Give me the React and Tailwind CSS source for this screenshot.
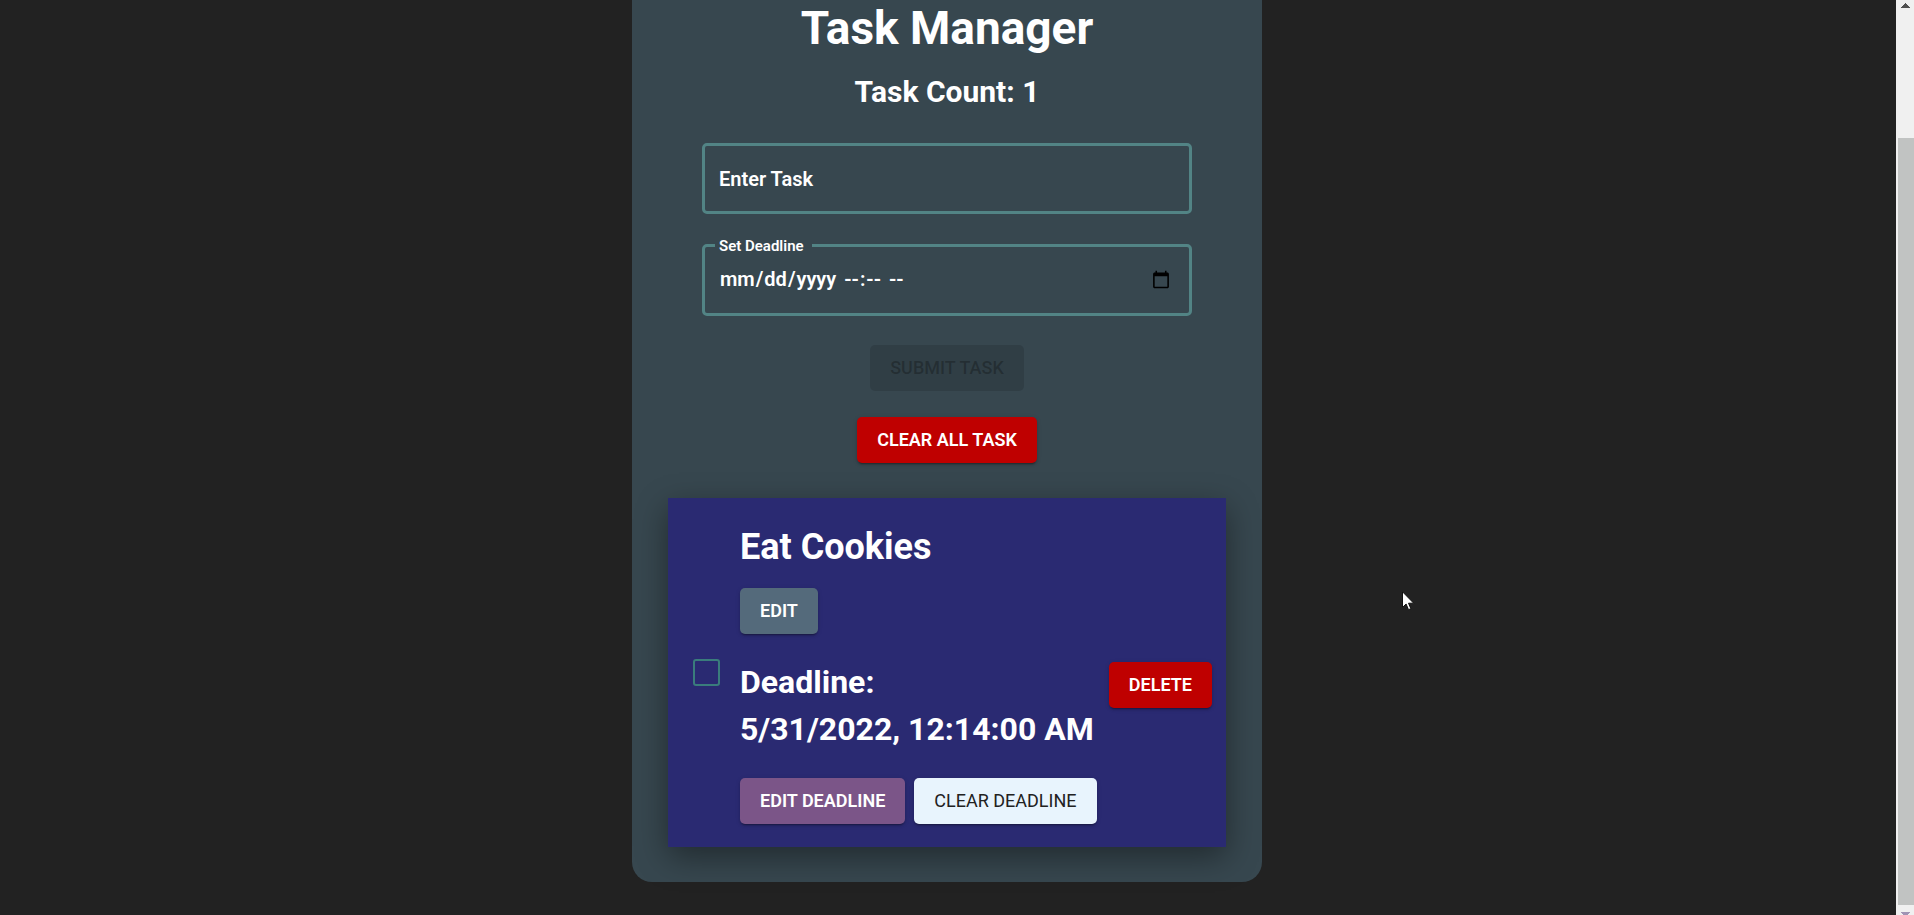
import { useState } from "react";
import clsx from "clsx";

const buttonBase = "rounded-[5px] px-5 py-2 text-lg leading-[30px] uppercase whitespace-nowrap";
const raised =
  "shadow-[0_3px_1px_-2px_rgba(0,0,0,0.2),0_2px_2px_0_rgba(0,0,0,0.14),0_1px_5px_0_rgba(0,0,0,0.12)]";
const field =
  "block w-full rounded-[5px] border-3 border-[#528485] pr-4 pl-[14px] text-xl font-semibold outline-none";

function Button({ className, ...props }) {
  return <button type="button" className={clsx(buttonBase, className)} {...props} />;
}

function Scrollbar() {
  return (
    <div aria-hidden="true" className="flex w-[18px] shrink-0 flex-col items-center bg-[#f0f0f0]">
      <svg className="mt-[3px] h-[5px] w-[9px]" viewBox="0 0 9 5" shapeRendering="crispEdges">
        <path d="M4 0h1v1h1v1h1v1h1v1h1v1H0V4h1V3h1V2h1V1h1z" fill="#505050" />
      </svg>
      <div className="mt-[130px] ml-[2px] w-4 flex-1 bg-[#c1c3c2]" />
      <svg className="mt-[7px] h-[3px] w-[9px]" viewBox="0 0 9 3" shapeRendering="crispEdges">
        <path d="M0 0h9v1H8v1H7v1H2V2H1V1H0z" fill="#a094b4" />
      </svg>
    </div>
  );
}

function Pointer() {
  return (
    <svg className="pointer-events-none absolute top-[591px] left-[1402px] h-[20px] w-[13px]" viewBox="0 0 13 20">
      <path d="M.5 .8v15.6l3.6-3.4 2.4 5.7 2.4-1-2.4-5.5h5.2z" fill="#fff" stroke="#111" strokeWidth="1" />
    </svg>
  );
}

export default function App() {
  const [task, setTask] = useState("");
  const [deadline, setDeadline] = useState("");
  const [editingDeadline, setEditingDeadline] = useState(false);
  const [done, setDone] = useState(false);
  const showMask = !deadline && !editingDeadline;

  return (
    <div className="relative flex h-screen overflow-hidden bg-[#222222] font-[Roboto,sans-serif] text-white">
      <main className="flex min-w-0 flex-1 items-start justify-center pr-0.5">
        <div className="flex w-full max-w-[630px] flex-col items-center rounded-b-[20px] bg-[#37474f] px-9 pb-[35px]">
          <h1 className="text-[46px] leading-[56px] font-bold">Task Manager</h1>
          <h2 className="mt-4 text-3xl leading-10 font-bold">Task Count: 1</h2>

          <form className="flex w-full flex-col items-center px-[34px] pt-[31px]">
            <div className="relative w-full">
              <label
                htmlFor="task"
                className={clsx(
                  "pointer-events-none absolute",
                  task
                    ? "-top-2 left-[13px] bg-[#37474f] pr-2 pl-1 text-[15px] leading-5 font-semibold"
                    : "inset-y-0 left-[17px] flex items-center text-xl font-semibold"
                )}
              >
                Enter Task
              </label>
              <input
                id="task"
                type="text"
                value={task}
                onChange={(e) => setTask(e.target.value)}
                className={clsx(field, "h-[71px]")}
              />
            </div>
            <div className="relative mt-[30px] w-full">
              <label
                htmlFor="deadline"
                className="absolute -top-2 left-[13px] bg-[#37474f] pr-2 pl-1 text-[15px] leading-5 font-semibold"
              >
                Set Deadline
              </label>
              <input
                id="deadline"
                type="datetime-local"
                value={deadline}
                onFocus={() => setEditingDeadline(true)}
                onBlur={() => setEditingDeadline(false)}
                onChange={(e) => setDeadline(e.target.value)}
                className={clsx(field, "h-[72px]", showMask && "[&::-webkit-datetime-edit]:opacity-0")}
              />
              {showMask && (
                <div
                  aria-hidden="true"
                  className="pointer-events-none absolute inset-y-0 left-[17px] flex items-center pb-0.5 text-xl font-semibold"
                >
                  <span className="px-px">mm</span>/<span className="px-px">dd</span>/
                  <span className="px-px">yyyy</span>
                  <span className="ml-1.5 px-px">--</span>:<span className="px-px">--</span>
                  <span className="ml-1.5 px-px">--</span>
                </div>
              )}
            </div>
            <Button disabled className="mt-[29px] bg-black/12 font-medium text-black/26">Submit Task</Button>
            <Button className={clsx("mt-[26px] bg-[#bf0000] font-semibold", raised)}>Clear All Task</Button>
          </form>

          <section className="mt-[35px] flex w-full items-center bg-[#2a2a72] pr-3.5 pl-[25px] shadow-[0_10px_30px_rgba(0,0,0,0.4)]">
            <input
              type="checkbox"
              aria-label="Mark Eat Cookies as done"
              checked={done}
              onChange={(e) => setDone(e.target.checked)}
              className="size-[27px] shrink-0 appearance-none rounded-[3px] border-2 border-[#3a7c7c] checked:bg-[#3a7c7c]"
            />
            <div className="ml-5 min-w-0 flex-1 pt-[25px] pb-[23px]">
              <h2 className="text-4xl leading-[48px] font-bold">Eat Cookies</h2>
              <Button className={clsx("mt-[17px] bg-[#546a7b] font-semibold", raised)}>Edit</Button>
              <h3 className="mt-[25px] text-[32px] leading-[47px] font-bold">
                Deadline:
                <br />
                <span className="whitespace-nowrap">5/31/2022, 12:14:00 AM</span>
              </h3>
              <div className="mt-[25px] flex gap-[9px]">
                <Button className={clsx("bg-[#7b5588] font-semibold", raised)}>Edit Deadline</Button>
                <Button className={clsx("bg-[#e8f4fd] text-[#212121]", raised)}>Clear Deadline</Button>
              </div>
            </div>
            <Button className={clsx("mt-6 bg-[#bf0000] font-semibold", raised)}>Delete</Button>
          </section>
        </div>
      </main>
      <Scrollbar />
      <Pointer />
    </div>
  );
}
